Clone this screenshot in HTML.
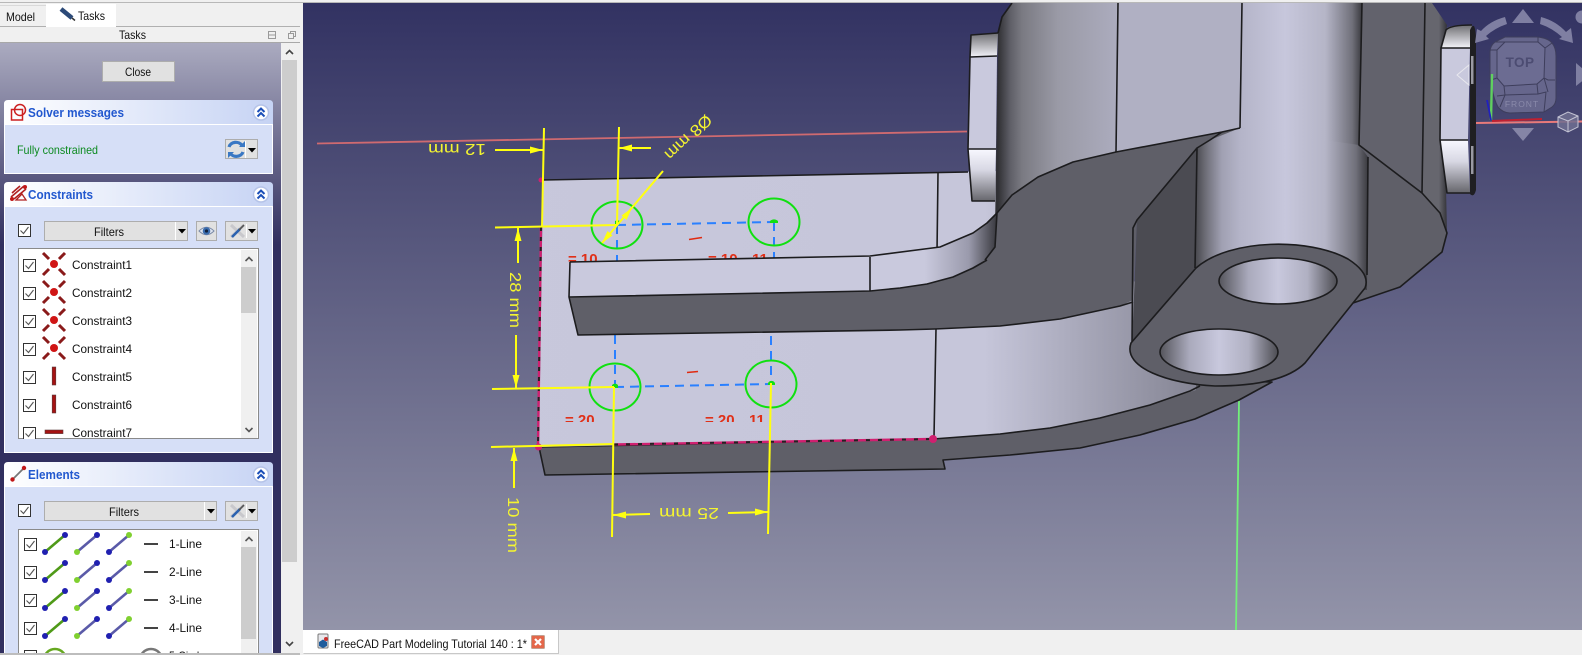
<!DOCTYPE html>
<html><head><meta charset="utf-8"><style>
html,body{margin:0;padding:0;background:#f0f0f0;width:1582px;height:655px;overflow:hidden}
svg{display:block;font-family:"Liberation Sans",sans-serif}
.ed{stroke:#1c1c1e;stroke-width:1.6;stroke-linejoin:round;fill:none}
.yl{stroke:#ffff10;stroke-width:2;fill:none}
.yt{fill:#f4f430;font-size:16px;font-weight:400}
.rt{fill:#e03018;font-size:15px;font-weight:700}
.lb{font-size:12px;fill:#111}
.hd{font-size:12.5px;font-weight:700;fill:#2258cf}
</style></head><body>
<svg width="1582" height="655" viewBox="0 0 1582 655" xmlns="http://www.w3.org/2000/svg">
<defs>
<linearGradient id="vp" x1="0" y1="3" x2="0" y2="630" gradientUnits="userSpaceOnUse"><stop offset="0" stop-color="#323262"/><stop offset="1" stop-color="#9394a9"/></linearGradient>
<linearGradient id="pn" x1="0" y1="43" x2="0" y2="245" gradientUnits="userSpaceOnUse"><stop offset="0" stop-color="#ababc0"/><stop offset="1" stop-color="#312f5f"/></linearGradient>
<linearGradient id="hdr" x1="0" y1="0" x2="1" y2="0"><stop offset="0" stop-color="#ffffff"/><stop offset="1" stop-color="#c6d3f4"/></linearGradient>
<linearGradient id="plate" x1="0" y1="0" x2="1200" y2="0" gradientUnits="userSpaceOnUse"><stop offset="0" stop-color="#c9c9dd"/><stop offset=".82" stop-color="#c6c6da"/><stop offset="1" stop-color="#838392"/></linearGradient>
<linearGradient id="arm" x1="925" y1="0" x2="998" y2="0" gradientUnits="userSpaceOnUse"><stop offset="0" stop-color="#c9c9dd"/><stop offset=".6" stop-color="#9a9aac"/><stop offset="1" stop-color="#35353a"/></linearGradient>
<linearGradient id="cy1" x1="998" y1="0" x2="1118" y2="0" gradientUnits="userSpaceOnUse"><stop offset="0" stop-color="#303034"/><stop offset=".1" stop-color="#5e5e66"/><stop offset=".2" stop-color="#7a7a82"/><stop offset=".5" stop-color="#9a9aa6"/><stop offset="1" stop-color="#acacbe"/></linearGradient>
<linearGradient id="cy2" x1="1240" y1="0" x2="1362" y2="0" gradientUnits="userSpaceOnUse"><stop offset="0" stop-color="#b4b4c8"/><stop offset=".37" stop-color="#c7c7dc"/><stop offset=".7" stop-color="#b5b5c7"/><stop offset=".92" stop-color="#70707a"/><stop offset="1" stop-color="#3a3a3f"/></linearGradient>
<linearGradient id="cy3" x1="1196" y1="0" x2="1368" y2="0" gradientUnits="userSpaceOnUse"><stop offset="0" stop-color="#4a4a50"/><stop offset=".06" stop-color="#70707a"/><stop offset=".15" stop-color="#a0a0b2"/><stop offset=".256" stop-color="#b4b4c8"/><stop offset=".52" stop-color="#c7c7dc"/><stop offset=".75" stop-color="#b5b5c7"/><stop offset=".93" stop-color="#70707a"/><stop offset="1" stop-color="#3a3a3f"/></linearGradient>
<linearGradient id="cy4" x1="1425" y1="0" x2="1448" y2="0" gradientUnits="userSpaceOnUse"><stop offset="0" stop-color="#66666e"/><stop offset=".6" stop-color="#66666e"/><stop offset="1" stop-color="#2e2e32"/></linearGradient>
<linearGradient id="hole" x1="0" y1="0" x2="1" y2="0"><stop offset="0" stop-color="#55555c"/><stop offset=".25" stop-color="#aaaabc"/><stop offset=".5" stop-color="#c8c8dd"/><stop offset=".75" stop-color="#b0b0c2"/><stop offset="1" stop-color="#4c4c52"/></linearGradient>
<linearGradient id="capT" x1="0" y1="0" x2="0" y2="1"><stop offset="0" stop-color="#6e6e72"/><stop offset="1" stop-color="#f4f4fa"/></linearGradient>
<linearGradient id="capB" x1="0" y1="0" x2="0" y2="1"><stop offset="0" stop-color="#f8f8ff"/><stop offset=".4" stop-color="#d8d8e4"/><stop offset="1" stop-color="#66666c"/></linearGradient>
<clipPath id="vc"><rect x="303" y="3" width="1279" height="627"/></clipPath>
<clipPath id="lc1"><rect x="18" y="248" width="241" height="191"/></clipPath>
<clipPath id="lc2"><rect x="18" y="529" width="241" height="124"/></clipPath>
<clipPath id="rc"><rect x="560" y="400" width="230" height="22"/></clipPath>
<g id="cb"><rect x=".5" y=".5" width="12" height="12" fill="#fff" stroke="#333"/><path d="M2.5 6.5l3 3 5-6.5" fill="none" stroke="#555" stroke-width="1.1"/></g>
<g id="cx"><path d="M-11-11l6 6M11-11l-6 6M-11 11l6-6M11 11l-6-6" stroke="#8a1a1a" stroke-width="3"/><circle r="4" fill="#d01515"/></g>
<g id="cv"><rect x="-1.8" y="-9" width="3.6" height="18" fill="#a51212" stroke="#5a3a3a" stroke-width=".6"/></g>
<g id="chev"><circle r="7.5" fill="#fff" stroke="#b5c3e8" stroke-width="1.5"/><path d="M-3.5-.5l3.500-3.500 3.500 3.500M-3.500 4l3.500-3.500 3.500 3.500" fill="none" stroke="#1c4fb8" stroke-width="2"/></g>
<g id="lnrow">
<path d="M45 8L65-9" stroke="#4f9a18" stroke-width="2.6"/><circle cx="45" cy="8" r="3" fill="#2020b0"/><circle cx="65" cy="-9" r="3" fill="#2020b0"/>
<path d="M77 8L97-9" stroke="#5a5aa8" stroke-width="2.6"/><circle cx="77" cy="8" r="3" fill="#80d030"/><circle cx="97" cy="-9" r="3" fill="#2020b0"/>
<path d="M109 8L129-9" stroke="#5a5aa8" stroke-width="2.6"/><circle cx="109" cy="8" r="3" fill="#2020b0"/><circle cx="129" cy="-9" r="3" fill="#80d030"/>
<rect x="144" y="-1" width="14" height="2" fill="#444"/></g>
<g id="tool"><rect x=".5" y=".5" width="32" height="19" fill="#e1e1e1" stroke="#adadad"/><path d="M6 16L19 4" stroke="#c8c8cc" stroke-width="3"/><path d="M6 4L19 16" stroke="#c8c8cc" stroke-width="3"/><path d="M7 16L15 8" stroke="#2a62b0" stroke-width="2.6"/><path d="M14 9l5-5" stroke="#555" stroke-width="1.6"/><path d="M21.5 3v14" stroke="#fff"/><path d="M24 8h8l-4 4.5z" fill="#000" transform="translate(-1 0)"/></g>
</defs>

<rect width="1582" height="655" fill="#f0f0f0"/>
<rect y="2" width="1582" height="1" fill="#b8b8b8"/>

<!-- left tabs -->
<rect x="0" y="26" width="300" height="1" fill="#b0b0b0"/>
<rect x="0" y="5" width="46" height="1" fill="#d9d9d9"/>
<rect x="46" y="4" width="70" height="23" fill="#fff"/>
<text class="lb" x="6" y="21" textLength="29" lengthAdjust="spacingAndGlyphs">Model</text>
<path d="M61 9l11 9" stroke="#2c4a78" stroke-width="4.5"/><path d="M72 18l3 2.5" stroke="#333" stroke-width="1.5"/>
<text class="lb" x="78" y="20" textLength="27" lengthAdjust="spacingAndGlyphs">Tasks</text>
<text class="lb" x="119" y="39" textLength="27" lengthAdjust="spacingAndGlyphs">Tasks</text>
<g fill="none" stroke="#9a9a9a"><rect x="268.500" y="31.500" width="7" height="7"/><path d="M268 35h8"/><rect x="290.500" y="31.500" width="5" height="5"/><rect x="288.500" y="33.500" width="5" height="5" fill="#f0f0f0"/></g>
<rect x="0" y="42" width="300" height="1" fill="#a8a8a8"/>

<!-- panel -->
<rect x="0" y="43" width="281" height="612" fill="url(#pn)"/>
<rect x="281" y="43" width="19" height="610" fill="#f0f0f0"/>
<rect x="282" y="60" width="15" height="502" fill="#cdcdcd"/>
<path d="M286 54l3.500-3.500 3.500 3.500" fill="none" stroke="#444" stroke-width="1.6"/>
<path d="M286 642l3.500 3.500 3.500-3.500" fill="none" stroke="#444" stroke-width="1.6"/>
<rect x="102.500" y="61.500" width="72" height="20" fill="#e1e1e1" stroke="#adadad"/>
<text class="lb" x="125" y="76" textLength="26" lengthAdjust="spacingAndGlyphs">Close</text>

<!-- solver box -->
<rect x="4.500" y="124.500" width="268" height="49" fill="#d6dff7" stroke="#fff"/>
<path d="M4 124v-20q0-4 4-4h261q4 0 4 4v20z" fill="url(#hdr)"/><rect x="5" y="124" width="267" height="1" fill="#fff"/>
<rect x="11.500" y="109.500" width="11" height="10.500" fill="none" stroke="#cc2020" stroke-width="1.5"/><circle cx="20" cy="110" r="5.500" fill="none" stroke="#cc2020" stroke-width="1.5"/>
<text class="hd" x="28" y="117" textLength="96" lengthAdjust="spacingAndGlyphs">Solver messages</text>
<use href="#chev" x="261" y="112.500"/>
<text x="17" y="154" font-size="12" fill="#0c8a20" textLength="81" lengthAdjust="spacingAndGlyphs">Fully constrained</text>
<rect x="225.500" y="139.500" width="32" height="19" fill="#e1e1e1" stroke="#adadad"/>
<path d="M229 147a7 6 0 0 1 13-1.500M243 152a7 6 0 0 1-13 1" fill="none" stroke="#3a78c4" stroke-width="3.200"/>
<path d="M245 141v6h-6zM228 158v-6h6z" fill="#3a78c4"/>
<path d="M245.500 141v17" stroke="#fff"/><path d="M248 148h8l-4 4.500z" fill="#000"/>

<!-- constraints box -->
<rect x="4.500" y="206.500" width="268" height="246" fill="#d6dff7" stroke="#fff"/>
<path d="M4 206v-20q0-4 4-4h261q4 0 4 4v20z" fill="url(#hdr)"/><rect x="5" y="206" width="267" height="1" fill="#fff"/>
<path d="M11 197L24 186M14 199L26 189M12 193L20 186" stroke="#b02020" stroke-width="1.600"/><path d="M16 200h10l-4-6z" fill="none" stroke="#b02020" stroke-width="1.300"/><circle cx="12" cy="199" r="2" fill="#c01818"/><circle cx="25" cy="187" r="2" fill="#c01818"/>
<text class="hd" x="28" y="199" textLength="65" lengthAdjust="spacingAndGlyphs">Constraints</text>
<use href="#chev" x="261" y="194.500"/>
<use href="#cb" x="18" y="224"/>
<rect x="44.500" y="221.500" width="143" height="19" fill="#e1e1e1" stroke="#adadad"/>
<text class="lb" x="94" y="236" textLength="30" lengthAdjust="spacingAndGlyphs">Filters</text>
<path d="M175.500 222v18" stroke="#fff"/><path d="M178 229h8l-4 4.500z" fill="#000"/>
<rect x="196.500" y="221.500" width="20" height="19" fill="#e1e1e1" stroke="#adadad"/>
<path d="M199 231q7.500-7.500 15 0q-7.500 7.500-15 0z" fill="#dfe4ee" stroke="#7a8aa8"/><circle cx="206.500" cy="231" r="3.800" fill="#3a6cae"/><circle cx="206.500" cy="231" r="1.600" fill="#10203c"/>
<use href="#tool" x="225" y="221"/>

<rect x="18.500" y="248.500" width="240" height="190" fill="#fff" stroke="#8a8a8a"/>
<rect x="241" y="250" width="16" height="188" fill="#f0f0f0"/>
<rect x="241" y="267" width="15" height="46" fill="#cdcdcd"/>
<path d="M245.500 261l3.500-3.500 3.500 3.500" fill="none" stroke="#555" stroke-width="1.600"/>
<path d="M245.500 428l3.500 3.500 3.500-3.500" fill="none" stroke="#555" stroke-width="1.600"/>
<g clip-path="url(#lc1)">
<use href="#cb" x="23" y="259"/><use href="#cb" x="23" y="287"/><use href="#cb" x="23" y="315"/><use href="#cb" x="23" y="343"/><use href="#cb" x="23" y="371"/><use href="#cb" x="23" y="399"/><use href="#cb" x="23" y="427"/>
<use href="#cx" x="54" y="264"/><use href="#cx" x="54" y="292"/><use href="#cx" x="54" y="320"/><use href="#cx" x="54" y="348"/>
<use href="#cv" x="54" y="376"/><use href="#cv" x="54" y="404"/>
<rect x="45" y="430" width="18" height="3.600" fill="#a51212" stroke="#5a3a3a" stroke-width=".6"/>
<text class="lb" x="72" y="269" textLength="60" lengthAdjust="spacingAndGlyphs">Constraint1</text>
<text class="lb" x="72" y="297" textLength="60" lengthAdjust="spacingAndGlyphs">Constraint2</text>
<text class="lb" x="72" y="325" textLength="60" lengthAdjust="spacingAndGlyphs">Constraint3</text>
<text class="lb" x="72" y="353" textLength="60" lengthAdjust="spacingAndGlyphs">Constraint4</text>
<text class="lb" x="72" y="381" textLength="60" lengthAdjust="spacingAndGlyphs">Constraint5</text>
<text class="lb" x="72" y="409" textLength="60" lengthAdjust="spacingAndGlyphs">Constraint6</text>
<text class="lb" x="72" y="437" textLength="60" lengthAdjust="spacingAndGlyphs">Constraint7</text>
</g>

<!-- elements box -->
<rect x="4.500" y="486.500" width="268" height="175" fill="#d6dff7" stroke="#fff"/>
<path d="M4 486v-20q0-4 4-4h261q4 0 4 4v20z" fill="url(#hdr)"/><rect x="5" y="486" width="267" height="1" fill="#fff"/>
<path d="M13 479L24 468" stroke="#777" stroke-width="1.800"/><circle cx="12.500" cy="479.500" r="2.200" fill="#c01818"/><circle cx="24" cy="468" r="2.200" fill="#c01818"/>
<text class="hd" x="28" y="479" textLength="52" lengthAdjust="spacingAndGlyphs">Elements</text>
<use href="#chev" x="261" y="474.500"/>
<use href="#cb" x="18" y="504"/>
<rect x="44.500" y="501.500" width="172" height="19" fill="#e1e1e1" stroke="#adadad"/>
<text class="lb" x="109" y="516" textLength="30" lengthAdjust="spacingAndGlyphs">Filters</text>
<path d="M204.500 502v18" stroke="#fff"/><path d="M207 509h8l-4 4.500z" fill="#000"/>
<use href="#tool" x="225" y="501"/>

<rect x="18.500" y="529.500" width="240" height="130" fill="#fff" stroke="#8a8a8a"/>
<rect x="241" y="531" width="16" height="122" fill="#f0f0f0"/>
<rect x="241" y="547" width="15" height="92" fill="#cdcdcd"/>
<path d="M245.500 541l3.500-3.500 3.500 3.500" fill="none" stroke="#555" stroke-width="1.600"/>
<g clip-path="url(#lc2)">
<use href="#cb" x="24" y="538"/><use href="#cb" x="24" y="566"/><use href="#cb" x="24" y="594"/><use href="#cb" x="24" y="622"/><use href="#cb" x="24" y="650"/>
<use href="#lnrow" x="0" y="544"/><use href="#lnrow" x="0" y="572"/><use href="#lnrow" x="0" y="600"/><use href="#lnrow" x="0" y="628"/>
<text class="lb" x="169" y="548" textLength="33" lengthAdjust="spacingAndGlyphs">1-Line</text>
<text class="lb" x="169" y="576" textLength="33" lengthAdjust="spacingAndGlyphs">2-Line</text>
<text class="lb" x="169" y="604" textLength="33" lengthAdjust="spacingAndGlyphs">3-Line</text>
<text class="lb" x="169" y="632" textLength="33" lengthAdjust="spacingAndGlyphs">4-Line</text>
<circle cx="55" cy="660" r="11" fill="none" stroke="#66a820" stroke-width="2.500"/>
<circle cx="151" cy="660" r="11" fill="none" stroke="#777" stroke-width="2.500"/>
<text class="lb" x="169" y="660" textLength="36" lengthAdjust="spacingAndGlyphs">5-Circle</text>
</g>
<rect x="0" y="653" width="300" height="2" fill="#bdbdbd"/>

<!-- viewport -->
<rect x="303" y="3" width="1279" height="627" fill="url(#vp)"/>
<g clip-path="url(#vc)">
<path d="M317 143.500L967 131.500" stroke="#cf6a70" stroke-width="1.800"/>
<path d="M1476 123L1582 121.500" stroke="#e87a7a" stroke-width="2"/>
<path d="M1239 401L1236 630" stroke="#72f07a" stroke-width="1.800"/>

<!-- lower dark strip -->
<path d="M539 447L545 475L945 469L943 460L1010 455L1080 448L1140 435L1195 419L1239 400L1272 382L1200 380L933 439Z" fill="#5f5f68" stroke="#1c1c1e" stroke-width="1.600" stroke-linejoin="round"/>
<!-- plate -->
<path d="M543 180L1000 171L1000 300L1132 280L1196 320L1196 390L1150 405L1100 418L1050 428L1000 434L933 439L539 447Z" fill="url(#plate)"/>
<path class="ed" d="M543 180L968 172"/>
<path class="ed" d="M938 173L937 252M936 329L934 437"/>
<path class="ed" d="M933 439L1000 434L1050 428L1100 418L1150 405L1190 391L1200 386"/>

<!-- sketch -->
<g fill="none" stroke="#2a80ff" stroke-width="2" stroke-dasharray="9 6"><path d="M617 225L774 222"/><path d="M615 387L771 384"/><path d="M617 225V262"/><path d="M774 222V262"/><path d="M615 335V387"/><path d="M771 336V384"/></g>
<g fill="none" stroke="#10e010" stroke-width="2"><ellipse cx="617" cy="225" rx="25.500" ry="23.500"/><ellipse cx="774" cy="222" rx="25.500" ry="23.500"/><ellipse cx="615" cy="387" rx="25.500" ry="23.500"/><ellipse cx="771" cy="384" rx="25.500" ry="23.500"/></g>
<path d="M615 221a5 4 0 0 1 5 0v3h-5zM770 221a5 4 0 0 1 8 0v2h-8zM612 385a4 4 0 0 1 6 0v3h-6zM768 383a4 4 0 0 1 7 0v2h-7z" fill="#10e010"/>
<text class="rt" x="568" y="264">= 10</text>
<text class="rt" x="708" y="264">= 10</text>
<text class="rt" x="752" y="264">11</text>
<g clip-path="url(#rc)"><text class="rt" x="565" y="425">= 20</text><text class="rt" x="705" y="425">= 20</text><text class="rt" x="749" y="425">11</text></g>
<path d="M689 239.500L702 237.500M687 372.500L698 371.500" stroke="#e02a10" stroke-width="1.600"/>

<!-- pink dashed -->
<path d="M541 227L538 447" stroke="#d02070" stroke-width="2.400"/>
<path d="M541 227L538 447" stroke="#222" stroke-width="2" stroke-dasharray="4 6"/>
<path d="M614 444.500L933 439" stroke="#d02070" stroke-width="2.400"/>
<path d="M614 444.500L933 439" stroke="#222" stroke-width="2" stroke-dasharray="4 8"/>
<circle cx="538.500" cy="447" r="3.500" fill="#d02070"/><circle cx="933" cy="439" r="4" fill="#d02070"/><circle cx="541" cy="180" r="2.500" fill="#d02070"/>

<!-- body -->
<path d="M1012 3L1002 17L998 33L995 230L1120 200L1242 128L1242 3Z" fill="url(#cy1)"/>
<path d="M1118 3L1242 3L1240 128L1116 152Z" fill="#b0b0c3"/>
<path d="M1242 3H1362L1359 145L1300 140L1240 128Z" fill="url(#cy2)"/>
<path d="M1362 3H1425L1422 193L1359 145Z" fill="#62626c"/>
<path d="M1425 3H1432L1447 25L1443 50L1447 233L1422 193Z" fill="url(#cy4)"/>
<path d="M1359 145L1422 193L1440 213L1447 233L1442 252L1400 287L1353 303L1340 280L1367 262L1368 157Z" fill="#5f5f68"/>
<path d="M1197 148L1210 140L1222 132L1240 128L1359 145L1368 157L1367 290L1195 290Z" fill="url(#cy3)"/>
<path class="ed" d="M1118 3L1116 152M1242 3L1240 128M1362 3L1359 145L1422 193M1425 3L1422 193L1440 213L1447 233L1442 252L1400 287L1353 303M1368 157L1367 275M1012 3L1002 17L998 33"/>

<!-- arm -->
<path d="M570 262L870 256L940 247L973 233L987 223L997 213L997 247L985 260L973 268L953 277L927 284L900 288L870 291L569 297Z" fill="url(#arm)"/>
<path d="M569 297L870 291L900 288L927 284L953 277L973 268L985 260L995 247L997 213L1012 195L1038 177L1073 162L1116 152L1222 132L1240 128L1210 140L1197 148L1137 220L1133 300L1120 306L1060 319L1000 326L935 329L900 330L578 335Z" fill="#5f5f68"/>
<path class="ed" d="M570 262L870 256L940 247L973 233L987 223L997 213L1012 195L1038 177L1073 162L1116 152L1222 132L1240 128M570 262L569 297L578 335L900 330L935 329L1000 326L1060 319L1120 306L1133 302M569 297L870 291L900 288L927 284L953 277L973 268L987 260M870 257L870 291M997 213L995 247L985 260"/>
<path d="M1197 148L1137 220L1132 347L1195 270Z" fill="#4b4b52"/>
<path class="ed" d="M1222 132L1210 140L1197 148L1137 220L1133 228L1132 345M1197 148L1195 268"/>

<!-- flange -->
<path d="M1131 343L1196 268C1230 238 1310 238 1348 259C1362 268 1369 278 1365 288L1305 363C1290 378 1260 386 1215 386C1170 384 1122 368 1131 343Z" fill="#5f5f68" stroke="#1c1c1e" stroke-width="1.600" stroke-linejoin="round"/>
<ellipse cx="1278" cy="281" rx="59" ry="23" fill="url(#hole)" stroke="#1c1c1e" stroke-width="1.600"/>
<ellipse cx="1219" cy="352" rx="59" ry="23" fill="url(#hole)" stroke="#1c1c1e" stroke-width="1.600"/>

<!-- left lug -->
<path d="M971 35L998 33L997 56L970 57Z" fill="url(#capT)"/>
<path d="M970 57L997 56L996 149L968 149Z" fill="#c9c9dd"/>
<path d="M968 149L996 149L995 201L972 201Z" fill="url(#capB)"/>
<path class="ed" d="M998 33L971 35L970 57L968 149L972 201L995 201M970 57L997 56M968 149L996 149"/>
<!-- right lug -->
<path d="M1447 28Q1450 25 1472 25L1470 48L1441 48Z" fill="url(#capT)"/>
<path d="M1441 48H1470L1468 140H1440Z" fill="#c9c9dd"/>
<path d="M1440 140H1468L1470 193H1447Z" fill="url(#capB)"/>
<path d="M1470 30Q1472 25 1474 26Q1476 30 1476 42V190Q1474 198 1470 194Z" fill="#1f1f22"/>
<rect x="1471" y="56" width="2.500" height="28" fill="#9a9aa2"/><rect x="1471" y="146" width="2.500" height="28" fill="#9a9aa2"/>
<path class="ed" d="M1472 25Q1450 25 1446 30L1441 48L1440 140L1447 193L1470 193M1441 48H1470M1440 140H1468"/>

<!-- navicube -->
<path d="M1490 52Q1490 46 1495 42L1505 37H1537Q1548 38 1552 43Q1556 48 1556 56V98Q1556 104 1552 107L1544 112L1510 113Q1503 113 1498 107Q1494 100 1492 88L1490 78Z" fill="#66668c" stroke="#3e3e5c" stroke-width="1"/>
<path d="M1505 42H1538L1545 48L1544 78L1537 84L1504 86L1497 78V50Z" fill="#6c6c92" stroke="#3e3e5c" stroke-width="1"/>
<path d="M1490 50H1497M1495 42L1505 42M1538 37V42M1552 43L1545 48M1555 80H1548L1544 78M1497 78L1491 80M1504 86L1505 95L1538 94L1537 84M1505 95L1500 107M1505 95L1497 96M1538 94L1546 92L1544 112M1548 92L1544 78" fill="none" stroke="#3e3e5c" stroke-width="1"/>
<text x="1520" y="67" text-anchor="middle" font-size="13.500" font-weight="700" fill="#4c4c72" letter-spacing=".4">TOP</text>
<text x="1522" y="107" text-anchor="middle" font-size="8.500" fill="#8a8aaa" letter-spacing="1">FRONT</text>
<g fill="#7f7fa2">
<path d="M1523 9L1512 23H1534Z"/>
<path d="M1512 128H1534L1523 141Z" fill="#8585a6"/>
<path d="M1576 63V86L1590 75Z"/>
<circle cx="1582" cy="17" r="6.500"/>
<path d="M1505 17Q1490 21 1481 31L1477 29L1475 43L1489 39L1486 36Q1495 28 1507 24Z"/>
<path d="M1541 17Q1556 21 1566 32L1571 28L1573 43L1559 39L1562 37Q1552 28 1540 24Z"/>
</g>
<path d="M1457 75L1469 65V85Z" fill="none" stroke="#e8e8ee" stroke-width="1"/>
<path d="M1492 121L1542 119" stroke="#c02030" stroke-width="2"/>
<path d="M1491 120L1492 74" stroke="#60d060" stroke-width="2.400"/>
<path d="M1491 120L1487 100" stroke="#2020c0" stroke-width="1.800"/>
<path d="M1558 117L1568 112L1578 116V127L1568 132L1558 127Z" fill="#6e6e90" fill-opacity=".85" stroke="#c4c4d4"/>
<path d="M1558 117L1568 121L1578 116M1568 121V132" fill="none" stroke="#c4c4d4"/>

<!-- yellow dims -->
<g class="yl">
<path d="M544 128L542 227"/><path d="M619 127L617 225"/><path d="M495 227.500L617 225"/>
<path d="M492 389L614 387"/><path d="M491 447L614 444"/>
<path d="M614 387L612 537"/><path d="M771 383L768 534"/>
<path d="M495 150L543 150"/><path d="M651 148L619 148"/>
<path d="M663 171L602 243"/>
<path d="M518 263V228"/><path d="M516 335V388"/><path d="M514 488V448"/>
<path d="M613 515L650 514"/><path d="M728 513L768 512"/>
</g>
<g fill="#ffff10">
<path d="M543 150L530 146.500V153.500Z"/>
<path d="M619 148L632 144.500V151.500Z"/>
<path d="M518 228L514.500 241H521.500Z"/>
<path d="M516 388L512.500 375H519.500Z"/>
<path d="M514 448L510.500 461H517.500Z"/>
<path d="M613 515L626 511.500V518.500Z"/>
<path d="M768 512L755 508.500V515.500Z"/>
<path d="M602 243L607.500 231L612.500 235.500Z"/>
<path d="M632 208L626.500 220L621.500 215.500Z"/>
</g>
<text class="yt" transform="translate(457 144) rotate(180)" text-anchor="middle" x="0" y="0" textLength="58" lengthAdjust="spacingAndGlyphs">12 mm</text>
<text class="yt" transform="translate(689 508) rotate(180)" text-anchor="middle" x="0" y="0" textLength="60" lengthAdjust="spacingAndGlyphs">25 mm</text>
<text class="yt" transform="translate(510 272) rotate(90)" x="0" y="0" textLength="56" lengthAdjust="spacingAndGlyphs">28 mm</text>
<text class="yt" transform="translate(508 497) rotate(90)" x="0" y="0" textLength="56" lengthAdjust="spacingAndGlyphs">10 mm</text>
<text class="yt" transform="translate(710 118) rotate(137)" x="0" y="6" textLength="58" lengthAdjust="spacingAndGlyphs">Ø8 mm</text>
</g>

<!-- bottom tab -->
<rect x="303" y="630" width="1279" height="25" fill="#f0f0f0"/>
<rect x="303" y="630" width="255" height="23" fill="#fff"/>
<path d="M303.500 653.500H558.500V630" fill="none" stroke="#c8c8c8"/>
<rect x="318" y="634" width="10" height="14" rx="1" fill="#e8e8ec" stroke="#777"/>
<path d="M319 642l4-2.500 4 2.500v4l-4 2-4-2z" fill="#1e5c9c"/><circle cx="326" cy="639" r="2" fill="#c83030"/>
<text class="lb" x="334" y="648" textLength="193" lengthAdjust="spacingAndGlyphs">FreeCAD Part Modeling Tutorial 140 : 1*</text>
<rect x="531.500" y="635.500" width="13" height="13" rx="1" fill="#e4674a" stroke="#c4a090"/>
<path d="M535 639l6 6M541 639l-6 6" stroke="#fff" stroke-width="2.200"/>
</svg>
</body></html>
